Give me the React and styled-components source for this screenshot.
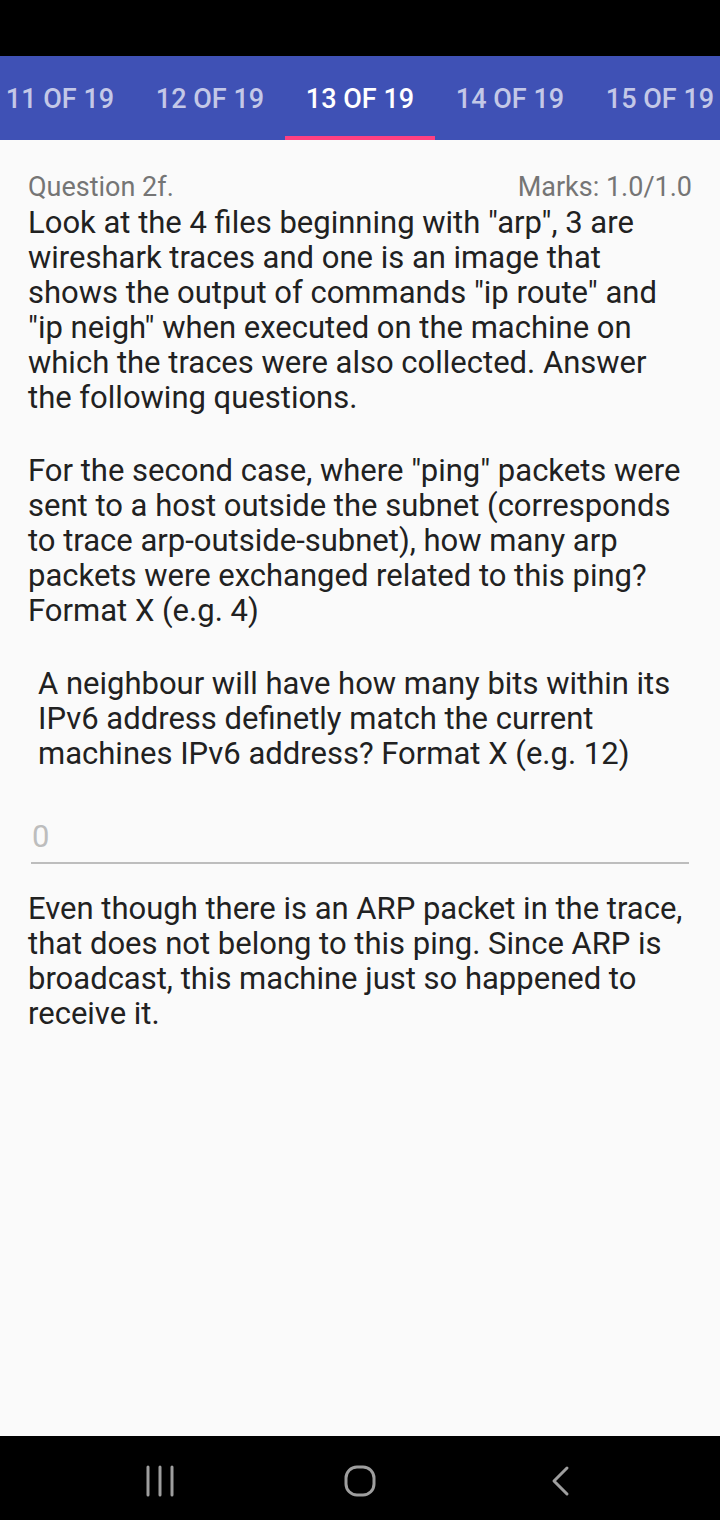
import styled, { createGlobalStyle } from "styled-components";

const Global = createGlobalStyle`
  html, body {
    margin: 0;
    padding: 0;
    background: #fafafa;
  }
  * {
    box-sizing: border-box;
  }
`;

const Screen = styled.div`
  width: 720px;
  height: 1520px;
  display: flex;
  flex-direction: column;
  background: #fafafa;
  font-family: Roboto, "Noto Sans", sans-serif;
  overflow: hidden;
`;

const StatusBar = styled.div`
  height: 56px;
  background: #000;
  flex-shrink: 0;
`;

const TabBar = styled.div`
  height: 84px;
  background: #3f51b5;
  display: flex;
  flex-shrink: 0;
  overflow: hidden;
`;

const TabRow = styled.div`
  display: flex;
  margin-left: -15px;
`;

const Tab = styled.div`
  width: 150px;
  flex-shrink: 0;
  display: flex;
  align-items: center;
  justify-content: center;
  font-size: 27px;
  font-weight: 500;
  color: ${(p) => (p.$active ? "#fff" : "rgba(255,255,255,0.7)")};
  border-bottom: 4px solid ${(p) => (p.$active ? "#ff4081" : "transparent")};
  padding-top: 6px;
  white-space: nowrap;
`;

const Content = styled.div`
  flex: 1;
  padding: 31px 28px 0 28px;
`;

const Header = styled.div`
  display: flex;
  justify-content: space-between;
  align-items: baseline;
  font-size: 27px;
  line-height: 32px;
  color: #757575;
`;

const Body = styled.div`
  font-size: 31px;
  line-height: 35px;
  color: #212121;
  padding-right: 6px;
  margin-top: ${(p) => p.$top || 1}px;
`;

const Para = styled.p`
  margin: 0;
  padding-left: ${(p) => p.$indent || 0}px;
`;

const Gap = styled.div`
  height: 38px;
`;

const InputWrap = styled.div`
  margin: 49px 3px 0 3px;
  border-bottom: 2px solid #bdbdbd;
  padding: 0 0 8px 1px;
`;

const Input = styled.div`
  font-size: 31px;
  line-height: 34px;
  color: #bdbdbd;
`;

const NavBar = styled.div`
  height: 84px;
  background: #000;
  flex-shrink: 0;
  display: flex;
  align-items: center;
  justify-content: space-around;
  padding: 6px 60px 0 60px;
`;

const NavIcon = styled.svg`
  width: 60px;
  height: 40px;
`;

export default function App() {
  const tabs = ["11 OF 19", "12 OF 19", "13 OF 19", "14 OF 19", "15 OF 19"];
  return (
    <Screen>
      <Global />
      <StatusBar />
      <TabBar>
        <TabRow>
          {tabs.map((t) => (
            <Tab key={t} $active={t === "13 OF 19"}>
              {t}
            </Tab>
          ))}
        </TabRow>
      </TabBar>
      <Content>
        <Header>
          <span>Question 2f.</span>
          <span>Marks: 1.0/1.0</span>
        </Header>
        <Body $top={2}>
          <Para>
            Look at the 4 files beginning with "arp", 3 are wireshark traces and
            one is an image that shows the output of commands "ip route" and
            "ip neigh" when executed on the machine on which the traces were
            also collected. Answer the following questions.
          </Para>
          <Gap />
          <Para>
            For the second case, where "ping" packets were sent to a host
            outside the subnet (corresponds to trace arp-outside-subnet), how
            many arp packets were exchanged related to this ping? Format X (e.g.
            4)
          </Para>
          <Gap />
          <Para $indent={10}>
            A neighbour will have how many bits within its IPv6 address
            definetly match the current machines IPv6 address? Format X (e.g.
            12)
          </Para>
        </Body>
        <InputWrap>
          <Input>0</Input>
        </InputWrap>
        <Body $top={27}>
          <Para>
            Even though there is an ARP packet in the trace, that does not
            belong to this ping. Since ARP is broadcast, this machine just so
            happened to receive it.
          </Para>
        </Body>
      </Content>
      <NavBar>
        <NavIcon viewBox="0 0 60 40">
          <g stroke="#9e9e9e" strokeWidth="3" strokeLinecap="round">
            <line x1="18" y1="6" x2="18" y2="34" />
            <line x1="30" y1="6" x2="30" y2="34" />
            <line x1="42" y1="6" x2="42" y2="34" />
          </g>
        </NavIcon>
        <NavIcon viewBox="0 0 60 40">
          <rect
            x="16"
            y="6"
            width="28"
            height="28"
            rx="11"
            fill="none"
            stroke="#9e9e9e"
            strokeWidth="3"
          />
        </NavIcon>
        <NavIcon viewBox="0 0 60 40">
          <polyline
            points="37,7 24,20 37,33"
            fill="none"
            stroke="#9e9e9e"
            strokeWidth="3"
            strokeLinecap="round"
            strokeLinejoin="round"
          />
        </NavIcon>
      </NavBar>
    </Screen>
  );
}
